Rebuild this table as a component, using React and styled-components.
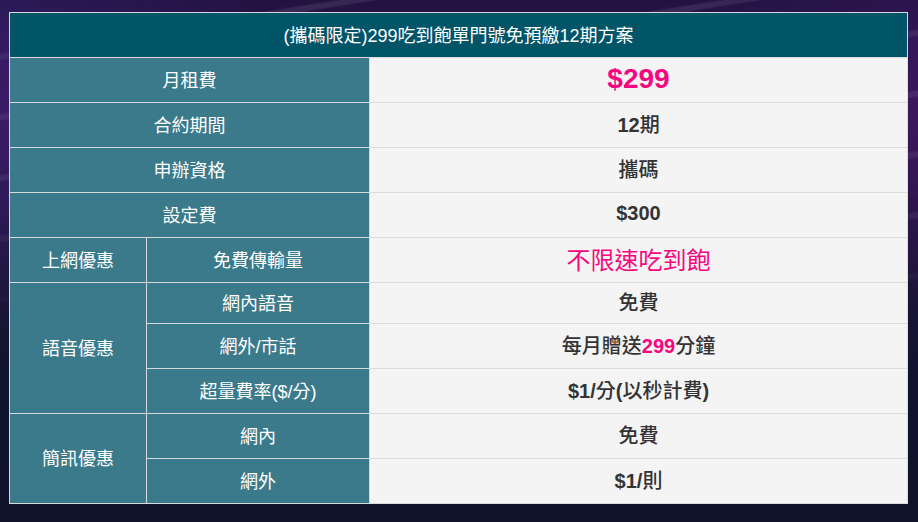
import React from "react";
import styled, { createGlobalStyle } from "styled-components";

const Global = createGlobalStyle`
  html, body { margin: 0; padding: 0; }
  body {
    background: #0f1229;
    font-family: "Liberation Sans", "Noto Sans CJK TC", Arial, sans-serif;
  }
`;

const Page = styled.div`
  position: relative;
  width: 918px;
  height: 522px;
  box-sizing: border-box;
  padding: 12px 10px 19px 9px;
  overflow: hidden;
  background:
    linear-gradient(180deg,
      #221240 0%,
      #2e1552 8%,
      #3a1658 22%,
      #2a1446 38%,
      #1a1535 55%,
      #111430 70%,
      #0f1229 100%);
  &::before {
    content: "";
    position: absolute;
    inset: 0;
    background:
      linear-gradient(90deg, rgba(60,40,130,0.35), rgba(0,0,0,0) 30%, rgba(0,0,0,0) 70%, rgba(70,30,110,0.25)),
      repeating-linear-gradient(171deg,
        rgba(255,255,255,0) 0px,
        rgba(255,255,255,0) 52px,
        rgba(255,255,255,0.09) 54px,
        rgba(255,255,255,0.09) 58px,
        rgba(255,255,255,0) 60px);
    -webkit-mask-image: linear-gradient(180deg, #000 0%, #000 35%, transparent 65%);
    mask-image: linear-gradient(180deg, #000 0%, #000 35%, transparent 65%);
  }
`;

const Table = styled.table`
  position: relative;
  width: 899px;
  table-layout: fixed;
  border-collapse: collapse;
  border: 1px solid #dcdcdc;
`;

const Head = styled.th`
  height: 42px;
  padding: 0 0 2px;
  background: #025467;
  color: #ffffff;
  font-weight: normal;
  font-size: 18px;
  text-align: center;
  border: 1px solid #d6dadd;
`;

const Label = styled.td`
  height: ${(p) => (p.$h || 44) - 3}px;
  padding: 0 0 3px;
  background: #3b7a8b;
  color: #ffffff;
  font-size: 18px;
  text-align: center;
  vertical-align: middle;
  border: 1px solid #d6dadd;
`;

const Value = styled.td`
  padding: 0 0 3px;
  background: #f4f4f4;
  color: #333333;
  font-size: ${(p) => p.$size || 20}px;
  font-weight: ${(p) => (p.$light ? "normal" : "bold")};
  text-align: center;
  vertical-align: middle;
  border: 1px solid #dcdcdc;
  ${(p) => p.$pink && "color: #f7077f;"}
`;

const Pink = styled.span`
  color: #f7077f;
`;

const Han = styled.span`
  font-family: "Noto Sans CJK TC", sans-serif;
  font-weight: 500;
`;

const CJK = /([\u3400-\u9fff]+)/;

function Mixed({ text }) {
  return text.split(CJK).map((part, i) =>
    CJK.test(part) ? <Han key={i}>{part}</Han> : part
  );
}

const rows = [
  { label: "月租費", value: "$299", pink: true, size: 28 },
  { label: "合約期間", value: "12期" },
  { label: "申辦資格", value: "攜碼" },
  { label: "設定費", value: "$300" },
];

export default function App() {
  return (
    <>
      <Global />
      <Page>
        <Table>
          <colgroup>
            <col style={{ width: 137 }} />
            <col style={{ width: 223 }} />
            <col />
          </colgroup>
          <thead>
            <tr>
              <Head colSpan={3}>(攜碼限定)299吃到飽單門號免預繳12期方案</Head>
            </tr>
          </thead>
          <tbody>
            {rows.map((r) => (
              <tr key={r.label}>
                <Label colSpan={2}>{r.label}</Label>
                <Value $pink={r.pink} $size={r.size}>
                  <Mixed text={r.value} />
                </Value>
              </tr>
            ))}
            <tr>
              <Label>上網優惠</Label>
              <Label>免費傳輸量</Label>
              <Value $pink $light $size={24}>不限速吃到飽</Value>
            </tr>
            <tr>
              <Label rowSpan={3}>語音優惠</Label>
              <Label $h={40}>網內語音</Label>
              <Value><Mixed text="免費" /></Value>
            </tr>
            <tr>
              <Label>網外/市話</Label>
              <Value>
                <Mixed text="每月贈送" />
                <Pink>299</Pink>
                <Mixed text="分鐘" />
              </Value>
            </tr>
            <tr>
              <Label>超量費率($/分)</Label>
              <Value><Mixed text="$1/分(以秒計費)" /></Value>
            </tr>
            <tr>
              <Label rowSpan={2}>簡訊優惠</Label>
              <Label>網內</Label>
              <Value><Mixed text="免費" /></Value>
            </tr>
            <tr>
              <Label>網外</Label>
              <Value><Mixed text="$1/則" /></Value>
            </tr>
          </tbody>
        </Table>
      </Page>
    </>
  );
}
